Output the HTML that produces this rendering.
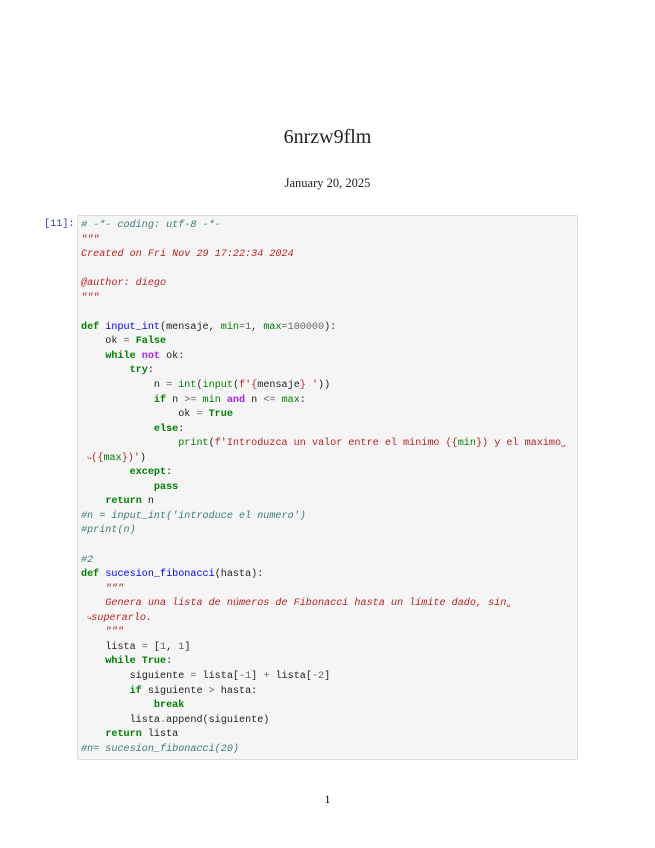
<!DOCTYPE html>
<html><head><meta charset="utf-8"><style>
body{margin:0;background:#fff;width:655px;height:848px;position:relative;overflow:hidden;font-family:"Liberation Serif",serif;}
.title{position:absolute;top:126px;left:0;width:655px;text-align:center;font-size:20px;color:#222;}
.date{position:absolute;top:176px;left:0;width:655px;text-align:center;font-size:12.5px;color:#222;}
.pn{position:absolute;top:792px;left:0;width:655px;text-align:center;font-size:12px;}
.prompt{position:absolute;left:44px;top:219px;font-family:"Liberation Mono",monospace;font-size:10.2px;color:#303f9f;}
.box{position:absolute;left:77px;top:215px;width:501px;height:545px;background:#f5f5f5;border:1px solid #dcdcdc;border-radius:2px;box-sizing:border-box;}
pre{position:absolute;left:81px;top:219px;margin:0;font-family:"Liberation Mono",monospace;font-size:10.15px;line-height:14.55px;color:#222;}
.c{color:#3d7a7a;font-style:italic}
.s{color:#ba2121}
.si{color:#ba2121;font-style:italic}
.k{color:#008000;font-weight:bold}
.b{color:#008000}
.f{color:#0000ff}
.n{color:#666}
.o{color:#aa22ff;font-weight:bold}
.a{color:#ba2121;font-size:7px}
</style></head><body>
<div class="title">6nrzw9flm</div>
<div class="date">January 20, 2025</div>
<div class="prompt">[11]:</div>
<div class="box"></div>
<pre><span class="c"># -*- coding: utf-8 -*-</span>
<span class="si">"""
Created on Fri Nov 29 17:22:34 2024

@author: diego
"""</span>

<span class="k">def</span> <span class="f">input_int</span>(mensaje, <span class="b">min</span><span class="n">=</span><span class="n">1</span>, <span class="b">max</span><span class="n">=</span><span class="n">100000</span>):
    ok <span class="n">=</span> <span class="k">False</span>
    <span class="k">while</span> <span class="o">not</span> ok:
        <span class="k">try</span>:
            n <span class="n">=</span> <span class="b">int</span>(<span class="b">input</span>(<span class="s">f'</span><span class="s">{</span>mensaje<span class="s">}</span><span class="s"> '</span>))
            <span class="k">if</span> n <span class="n">&gt;=</span> <span class="b">min</span> <span class="o">and</span> n <span class="n">&lt;=</span> <span class="b">max</span>:
                ok <span class="n">=</span> <span class="k">True</span>
            <span class="k">else</span>:
                <span class="b">print</span>(<span class="s">f'Introduzca un valor entre el minimo (</span><span class="s">{</span><span class="b">min</span><span class="s">}</span><span class="s">) y el maximo</span><span class="a">&#x2423;</span>
 <span class="a">↪</span><span class="s">(</span><span class="s">{</span><span class="b">max</span><span class="s">}</span><span class="s">)'</span>)
        <span class="k">except</span>:
            <span class="k">pass</span>
    <span class="k">return</span> n
<span class="c">#n = input_int('introduce el numero')</span>
<span class="c">#print(n)</span>

<span class="c">#2</span>
<span class="k">def</span> <span class="f">sucesion_fibonacci</span>(hasta):
    <span class="si">"""
    Genera una lista de números de Fibonacci hasta un límite dado, sin</span><span class="a">&#x2423;</span>
 <span class="a">↪</span><span class="si">superarlo.
    """</span>
    lista <span class="n">=</span> [<span class="n">1</span>, <span class="n">1</span>]
    <span class="k">while</span> <span class="k">True</span>:
        siguiente <span class="n">=</span> lista[<span class="n">-</span><span class="n">1</span>] <span class="n">+</span> lista[<span class="n">-</span><span class="n">2</span>]
        <span class="k">if</span> siguiente <span class="n">&gt;</span> hasta:
            <span class="k">break</span>
        lista<span class="n">.</span>append(siguiente)
    <span class="k">return</span> lista
<span class="c">#n= sucesion_fibonacci(20)</span></pre>
<div class="pn">1</div>
</body></html>
